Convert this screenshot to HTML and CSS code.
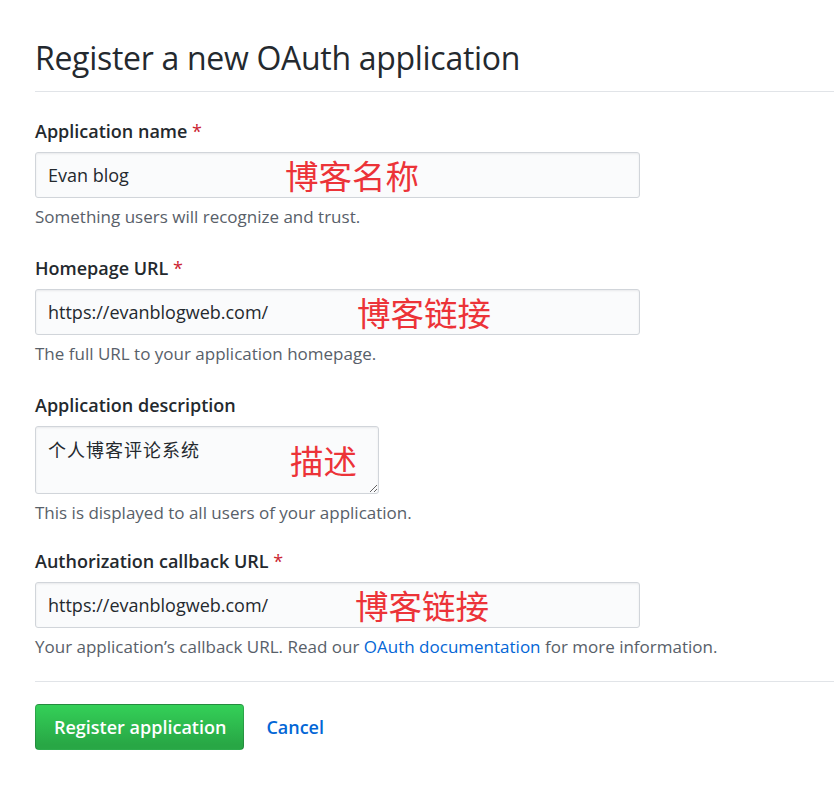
FILE: index.html
```html
<!DOCTYPE html>
<html lang="en">
<head>
<meta charset="utf-8">
<title>Register a new OAuth application</title>
<link rel="stylesheet" href="styles.css">
</head>
<body>
<div class="page">
  <h1 class="title">Register a new OAuth application</h1>
  <form class="form">
    <div class="field">
      <label class="label">Application name <span class="req">*</span></label>
      <div class="control wide">
        <input class="input" type="text" value="Evan blog">
        <span class="note-red n1">博客名称</span>
      </div>
      <p class="hint">Something users will recognize and trust.</p>
    </div>
    <div class="field">
      <label class="label">Homepage URL <span class="req">*</span></label>
      <div class="control wide">
        <input class="input" type="text" value="https://evanblogweb.com/">
        <span class="note-red n2">博客链接</span>
      </div>
      <p class="hint">The full URL to your application homepage.</p>
    </div>
    <div class="field field-desc">
      <label class="label">Application description</label>
      <div class="control narrow">
        <textarea class="textarea">个人博客评论系统</textarea>
        <span class="note-red n3">描述</span>
      </div>
      <p class="hint">This is displayed to all users of your application.</p>
    </div>
    <div class="field field-last">
      <label class="label">Authorization callback URL <span class="req">*</span></label>
      <div class="control wide">
        <input class="input" type="text" value="https://evanblogweb.com/">
        <span class="note-red n4">博客链接</span>
      </div>
      <p class="hint">Your application’s callback URL. Read our <a href="#" class="link">OAuth documentation</a> for more information.</p>
    </div>
    <div class="actions">
      <button type="button" class="btn">Register application</button>
      <a href="#" class="cancel">Cancel</a>
    </div>
  </form>
</div>
</body>
</html>
```

FILE: styles.css
```css
* { box-sizing: border-box; }
html, body { margin: 0; padding: 0; background: #fff; }
body {
  font-family: "Open Sans", "Noto Sans", "Noto Sans CJK SC", sans-serif;
  color: #24292e;
}
.page {
  padding: 28px 0 0 35px;
}
.title {
  margin: 0;
  font-weight: 400;
  font-size: 32px;
  line-height: 60px;
  padding-bottom: 3px;
  border-bottom: 1px solid #e1e4e8;
  letter-spacing: -0.3px;
}
.form { padding-top: 28px; }
.field { margin-bottom: 29px; }
.field-desc { margin-bottom: 26px; }
.field-last { margin-bottom: 0; }
.label {
  display: block;
  font-weight: 600;
  font-size: 18px;
  line-height: 22px;
  margin-bottom: 10px;
}
.req { color: #cb2431; font-weight: 400; }
.control { position: relative; }
.wide { width: 605px; }
.narrow { width: 344px; }
.input, .textarea {
  display: block;
  width: 100%;
  font-family: "Open Sans", "Noto Sans CJK SC", sans-serif;
  font-size: 18px;
  color: #24292e;
  background: #fafbfc;
  border: 1px solid #d1d5da;
  border-radius: 3px;
  box-shadow: inset 0 1px 2px rgba(27,31,35,0.075);
  outline: none;
}
.input {
  height: 46px;
  padding: 0 12px;
}
.textarea {
  height: 68px;
  padding: 12px 12px;
  resize: vertical;
  line-height: 22px;
  letter-spacing: 1px;
}
.note-red {
  position: absolute;
  top: 50%;
  transform: translateY(-50%);
  font-family: "Noto Sans CJK SC", sans-serif;
  font-size: 33.5px;
  line-height: 1;
  color: #ec3338;
  pointer-events: none;
}
.n1 { left: 250px; }
.n2 { left: 322px; }
.n3 { left: 255px; top: 34px; }
.n4 { left: 320px; }
.hint {
  margin: 8px 0 0;
  font-size: 17px;
  line-height: 22px;
  color: #586069;
}
.link { color: #0366d6; text-decoration: none; }
.actions {
  border-top: 1px solid #e1e4e8;
  margin-top: 23px;
  padding-top: 22px;
  display: flex;
  align-items: center;
  gap: 22px;
}
.btn {
  font-family: "Open Sans", sans-serif;
  font-weight: 600;
  font-size: 18px;
  color: #fff;
  height: 46px;
  padding: 0 17px 0 18px;
  border: 1px solid rgba(27,31,35,0.2);
  border-radius: 4px;
  background-image: linear-gradient(-180deg, #34d058 0%, #28a745 90%);
}
.cancel {
  font-weight: 600;
  font-size: 18px;
  color: #0366d6;
  text-decoration: none;
}
```
